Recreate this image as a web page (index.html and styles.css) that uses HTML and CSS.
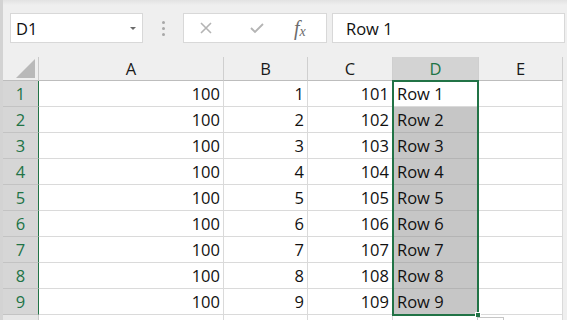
FILE: index.html
```html
<!DOCTYPE html>
<html lang="en">
<head>
    <meta charset="UTF-8">
    <title>Sheet1</title>
    <link rel="stylesheet" href="styles.css">
</head>
<body>
    <div class="app">
        <div class="toolbar">
            <div class="namebox">
                <span class="name">D1</span>
                <span class="caret"></span>
            </div>
            <div class="grip"><i></i><i></i><i></i></div>
            <div class="fxbox">
                <svg class="icon" width="14" height="14" viewBox="0 0 14 14">
                    <path d="M2 2 L12 12 M12 2 L2 12" stroke="#b4b4b4" stroke-width="1.6" fill="none"/>
                </svg>
                <svg class="icon" width="16" height="14" viewBox="0 0 16 14">
                    <path d="M2 7 L6 11 L14 3" stroke="#b4b4b4" stroke-width="1.8" fill="none"/>
                </svg>
                <span class="fx">f<sub>x</sub></span>
            </div>
            <div class="formula">Row 1</div>
        </div>

        <div class="sheet">
            <!-- header row -->
            <div class="corner"><span class="tri"></span></div>
            <div class="colhead">A</div>
            <div class="colhead">B</div>
            <div class="colhead">C</div>
            <div class="colhead active">D</div>
            <div class="colhead">E</div>

            <div class="rowhead">1</div><div class="cell num">100</div><div class="cell num">1</div><div class="cell num">101</div><div class="cell txt">Row 1</div><div class="cell"></div>
            <div class="rowhead">2</div><div class="cell num">100</div><div class="cell num">2</div><div class="cell num">102</div><div class="cell txt sel">Row 2</div><div class="cell"></div>
            <div class="rowhead">3</div><div class="cell num">100</div><div class="cell num">3</div><div class="cell num">103</div><div class="cell txt sel">Row 3</div><div class="cell"></div>
            <div class="rowhead">4</div><div class="cell num">100</div><div class="cell num">4</div><div class="cell num">104</div><div class="cell txt sel">Row 4</div><div class="cell"></div>
            <div class="rowhead">5</div><div class="cell num">100</div><div class="cell num">5</div><div class="cell num">105</div><div class="cell txt sel">Row 5</div><div class="cell"></div>
            <div class="rowhead">6</div><div class="cell num">100</div><div class="cell num">6</div><div class="cell num">106</div><div class="cell txt sel">Row 6</div><div class="cell"></div>
            <div class="rowhead">7</div><div class="cell num">100</div><div class="cell num">7</div><div class="cell num">107</div><div class="cell txt sel">Row 7</div><div class="cell"></div>
            <div class="rowhead">8</div><div class="cell num">100</div><div class="cell num">8</div><div class="cell num">108</div><div class="cell txt sel">Row 8</div><div class="cell"></div>
            <div class="rowhead">9</div><div class="cell num">100</div><div class="cell num">9</div><div class="cell num">109</div><div class="cell txt sel">Row 9</div><div class="cell"></div>

            <div class="rowhead blank"></div><div class="cell"></div><div class="cell"></div><div class="cell"></div><div class="cell"></div><div class="cell"></div>

            <!-- selection frame over D1:D9 -->
            <div class="selection">
                <span class="handle"></span>
                <span class="quick"></span>
            </div>
        </div>
    </div>
</body>
</html>
```

FILE: styles.css
```css
* {
    box-sizing: border-box;
}
body {
    margin: 0;
    font-family: "Open Sans", "Noto Sans", Arial, sans-serif;
    color: #111;
    background: #f1f1f1;
    overflow: hidden;
}
.app {
    width: 567px;
    height: 320px;
    background: linear-gradient(#e2e2e2 0, #efefef 5px, #efefef 100%);
    border-left: 3px solid #d3d3d3;
    overflow: hidden;
}
.toolbar {
    display: flex;
    align-items: center;
    height: 57px;
    padding: 13px 0 14px 7px;
}
.namebox {
    display: flex;
    align-items: center;
    justify-content: space-between;
    width: 133px;
    height: 30px;
    background: #fff;
    border: 1px solid #d8d8d8;
    padding: 0 6px 0 5px;
}
.name, .formula {
    font-size: 16.5px;
}
.caret {
    width: 0;
    height: 0;
    border-left: 3px solid transparent;
    border-right: 3px solid transparent;
    border-top: 3px solid #6a6a6a;
    margin-top: 1px;
}
.grip {
    width: 40px;
    display: flex;
    flex-direction: column;
    align-items: center;
    gap: 3px;
}
.grip i {
    display: block;
    width: 3px;
    height: 3px;
    border-radius: 50%;
    background: #a8a8a8;
}
.fxbox {
    display: flex;
    align-items: center;
    width: 144px;
    height: 30px;
    background: #fff;
    border: 1px solid #d8d8d8;
    padding-left: 15px;
}
.fxbox .icon {
    display: block;
}
.fxbox .icon + .icon {
    margin-left: 36px;
}
.fx {
    margin-left: 29px;
    font-family: "Liberation Serif", "DejaVu Serif", serif;
    font-style: italic;
    font-size: 20px;
    line-height: 1;
    color: #6c6c6c;
}
.fx sub {
    font-size: 14px;
    vertical-align: -1px;
}
.formula {
    display: flex;
    align-items: center;
    margin-left: 5px;
    width: 233px;
    height: 30px;
    background: #fff;
    border: 1px solid #d8d8d8;
    padding-left: 13px;
}
.sheet {
    position: relative;
    display: grid;
    grid-template-columns: 36px 185px 84px 85px 86px 84px;
    grid-template-rows: 24px repeat(9, 26px) 26px;
    font-size: 16.5px;
}
.corner {
    position: relative;
    border-right: 1px solid #c9c9c9;
    border-bottom: 1px solid #bdbdbd;
}
.tri {
    position: absolute;
    right: 3px;
    bottom: 2px;
    width: 0;
    height: 0;
    border-left: 19px solid transparent;
    border-bottom: 19px solid #b9b9b9;
}
.colhead {
    display: flex;
    align-items: center;
    justify-content: center;
    border-right: 1px solid #cfcfcf;
    border-bottom: 1px solid #bdbdbd;
    color: #1a1a1a;
}
.colhead.active {
    background: #d3d3d3;
    color: #217346;
}
.rowhead {
    display: flex;
    align-items: center;
    justify-content: center;
    background: #d6d6d6;
    color: #217346;
    border-bottom: 1px solid #c3c3c3;
    border-right: 1px solid #217346;
}
.rowhead.blank {
    background: #e6e6e6;
    border-right: 1px solid #c9c9c9;
}
.cell {
    display: flex;
    align-items: center;
    background: #fff;
    border-right: 1px solid #dadada;
    border-bottom: 1px solid #dadada;
    white-space: nowrap;
}
.num {
    justify-content: flex-end;
    padding-right: 3px;
}
.txt {
    padding-left: 4px;
}
.sel {
    background: #c6c6c6;
    border-bottom-color: #b4b4b4;
}
/* overlay: absolute child placed in the D1:D9 grid area */
.selection {
    position: absolute;
    grid-column: 5 / 6;
    grid-row: 2 / 11;
    top: -1px;
    bottom: -1px;
    left: -1px;
    right: 0;
    border: 2px solid #217346;
    pointer-events: none;
}
.handle {
    position: absolute;
    right: -4px;
    bottom: -4px;
    width: 6px;
    height: 6px;
    background: #217346;
    border: 1px solid #fff;
}
.quick {
    position: absolute;
    left: 100%;
    top: 100%;
    margin-top: 3px;
    width: 27px;
    height: 14px;
    background: #fff;
    border: 1px solid #c6c6c6;
}
```
